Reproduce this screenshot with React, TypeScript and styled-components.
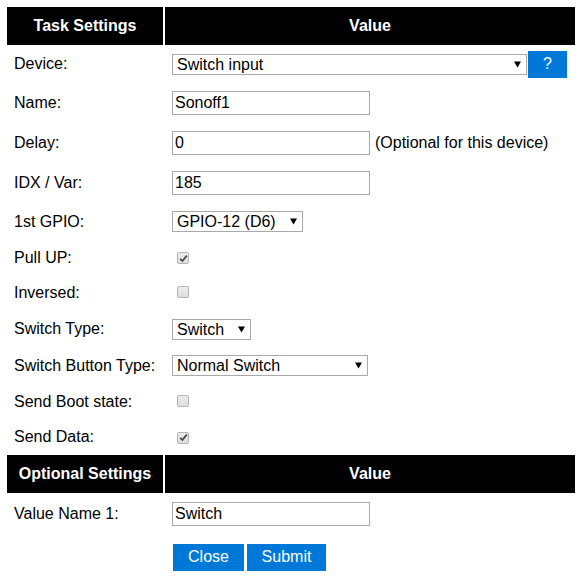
import styled, { createGlobalStyle } from "styled-components";

const GlobalStyle = createGlobalStyle`
  html, body {
    margin: 0;
    padding: 0;
    background: #ffffff;
  }
  body {
    font-family: "Liberation Sans", Arial, sans-serif;
    font-size: 16px;
    color: #000000;
  }
`;

const Page = styled.div`
  padding: 7px;
`;

const SettingsTable = styled.table`
  width: 568px;
  border-collapse: collapse;
  border-spacing: 0;
`;

const HeadCell = styled.th<{ $wide?: boolean }>`
  height: 38px;
  padding: 0;
  background: #000000;
  color: #ffffff;
  font-weight: bold;
  font-size: 16px;
  text-align: center;
  width: ${(p) => (p.$wide ? "auto" : "156px")};
  border-left: ${(p) => (p.$wide ? "2px solid #ffffff" : "none")};
`;

const Row = styled.tr<{ $h: number }>`
  height: ${(p) => p.$h}px;
`;

const LabelCell = styled.td`
  padding: 0 7px;
  vertical-align: middle;
  white-space: nowrap;
`;

const ValueCell = styled.td`
  padding: 0 0 0 8px;
  vertical-align: middle;
  white-space: nowrap;
`;

const Inline = styled.div`
  display: flex;
  align-items: center;
`;

const TextInput = styled.input`
  box-sizing: border-box;
  width: 198px;
  height: 24px;
  border: 1px solid #a9a9a9;
  padding: 0 2px;
  font-family: "Liberation Sans", Arial, sans-serif;
  font-size: 16px;
  color: #000000;
  background: #ffffff;
  outline: none;
`;

const Note = styled.span`
  margin-left: 5px;
`;

const SelectBox = styled.div<{ $w: number }>`
  position: relative;
  box-sizing: border-box;
  width: ${(p) => p.$w}px;
  height: 21px;
`;

const NativeSelect = styled.select`
  appearance: none;
  -webkit-appearance: none;
  box-sizing: border-box;
  width: 100%;
  height: 100%;
  border: 1px solid #a9a9a9;
  border-radius: 0;
  background: #ffffff;
  padding: 0 20px 0 4px;
  font-family: "Liberation Sans", Arial, sans-serif;
  font-size: 16px;
  color: #000000;
  outline: none;
`;

const Arrow = styled.svg`
  position: absolute;
  right: 6px;
  top: 7px;
  width: 7px;
  height: 7px;
  pointer-events: none;
`;

const HelpButton = styled.button`
  box-sizing: border-box;
  width: 39px;
  height: 27px;
  margin-left: 1px;
  border: none;
  background: #0078d7;
  color: #ffffff;
  font-family: "Liberation Sans", Arial, sans-serif;
  font-size: 16px;
  padding: 0;
`;

const CheckBox = styled.span`
  display: inline-flex;
  align-items: center;
  justify-content: center;
  box-sizing: border-box;
  width: 12px;
  height: 12px;
  margin-left: 5px;
  border: 1px solid #b4b4b4;
  border-radius: 2px;
  background: linear-gradient(#ececec, #dedede);
`;

const ButtonRow = styled.div`
  display: flex;
  gap: 2px;
`;

const ActionButton = styled.button<{ $w: number }>`
  box-sizing: border-box;
  width: ${(p) => p.$w}px;
  height: 27px;
  border: none;
  padding: 0;
  background: #0078d7;
  color: #ffffff;
  font-family: "Liberation Sans", Arial, sans-serif;
  font-size: 16px;
  margin-left: 1px;
`;

const Select = ({ w, value }: { w: number; value: string }) => (
  <SelectBox $w={w}>
    <NativeSelect defaultValue={value}>
      <option>{value}</option>
    </NativeSelect>
    <Arrow viewBox="0 0 7 7">
      <path d="M0 0.5 H7 L3.5 6.5 Z" fill="#000" />
    </Arrow>
  </SelectBox>
);

const Check = ({ checked }: { checked?: boolean }) => (
  <CheckBox>
    {checked && (
      <svg width="9" height="9" viewBox="0 0 9 9">
        <path
          d="M1.2 4.8 L3.4 7 L7.8 1.6"
          stroke="#4a4a4a"
          strokeWidth="1.8"
          fill="none"
        />
      </svg>
    )}
  </CheckBox>
);

const App = () => {
  return (
    <Page>
      <GlobalStyle />
      <SettingsTable>
        <tbody>
          <tr>
            <HeadCell>Task Settings</HeadCell>
            <HeadCell $wide>Value</HeadCell>
          </tr>
          <Row $h={38}>
            <LabelCell>Device:</LabelCell>
            <ValueCell>
              <Inline>
                <Select w={355} value="Switch input" />
                <HelpButton>?</HelpButton>
              </Inline>
            </ValueCell>
          </Row>
          <Row $h={40}>
            <LabelCell>Name:</LabelCell>
            <ValueCell>
              <TextInput defaultValue="Sonoff1" />
            </ValueCell>
          </Row>
          <Row $h={40}>
            <LabelCell>Delay:</LabelCell>
            <ValueCell>
              <Inline>
                <TextInput defaultValue="0" />
                <Note>(Optional for this device)</Note>
              </Inline>
            </ValueCell>
          </Row>
          <Row $h={40}>
            <LabelCell>IDX / Var:</LabelCell>
            <ValueCell>
              <TextInput defaultValue="185" />
            </ValueCell>
          </Row>
          <Row $h={37}>
            <LabelCell>1st GPIO:</LabelCell>
            <ValueCell>
              <Select w={131} value="GPIO-12 (D6)" />
            </ValueCell>
          </Row>
          <Row $h={35}>
            <LabelCell>Pull UP:</LabelCell>
            <ValueCell>
              <Check checked />
            </ValueCell>
          </Row>
          <Row $h={36}>
            <LabelCell>Inversed:</LabelCell>
            <ValueCell>
              <Check />
            </ValueCell>
          </Row>
          <Row $h={36}>
            <LabelCell>Switch Type:</LabelCell>
            <ValueCell>
              <Select w={79} value="Switch" />
            </ValueCell>
          </Row>
          <Row $h={37}>
            <LabelCell>Switch Button Type:</LabelCell>
            <ValueCell>
              <Select w={196} value="Normal Switch" />
            </ValueCell>
          </Row>
          <Row $h={35}>
            <LabelCell>Send Boot state:</LabelCell>
            <ValueCell>
              <Check />
            </ValueCell>
          </Row>
          <Row $h={36}>
            <LabelCell>Send Data:</LabelCell>
            <ValueCell>
              <Check checked />
            </ValueCell>
          </Row>
          <tr>
            <HeadCell>Optional Settings</HeadCell>
            <HeadCell $wide>Value</HeadCell>
          </tr>
          <Row $h={41}>
            <LabelCell>Value Name 1:</LabelCell>
            <ValueCell>
              <TextInput defaultValue="Switch" />
            </ValueCell>
          </Row>
          <Row $h={46}>
            <LabelCell />
            <ValueCell>
              <ButtonRow>
                <ActionButton $w={71}>Close</ActionButton>
                <ActionButton $w={79}>Submit</ActionButton>
              </ButtonRow>
            </ValueCell>
          </Row>
        </tbody>
      </SettingsTable>
    </Page>
  );
};

export default App;
